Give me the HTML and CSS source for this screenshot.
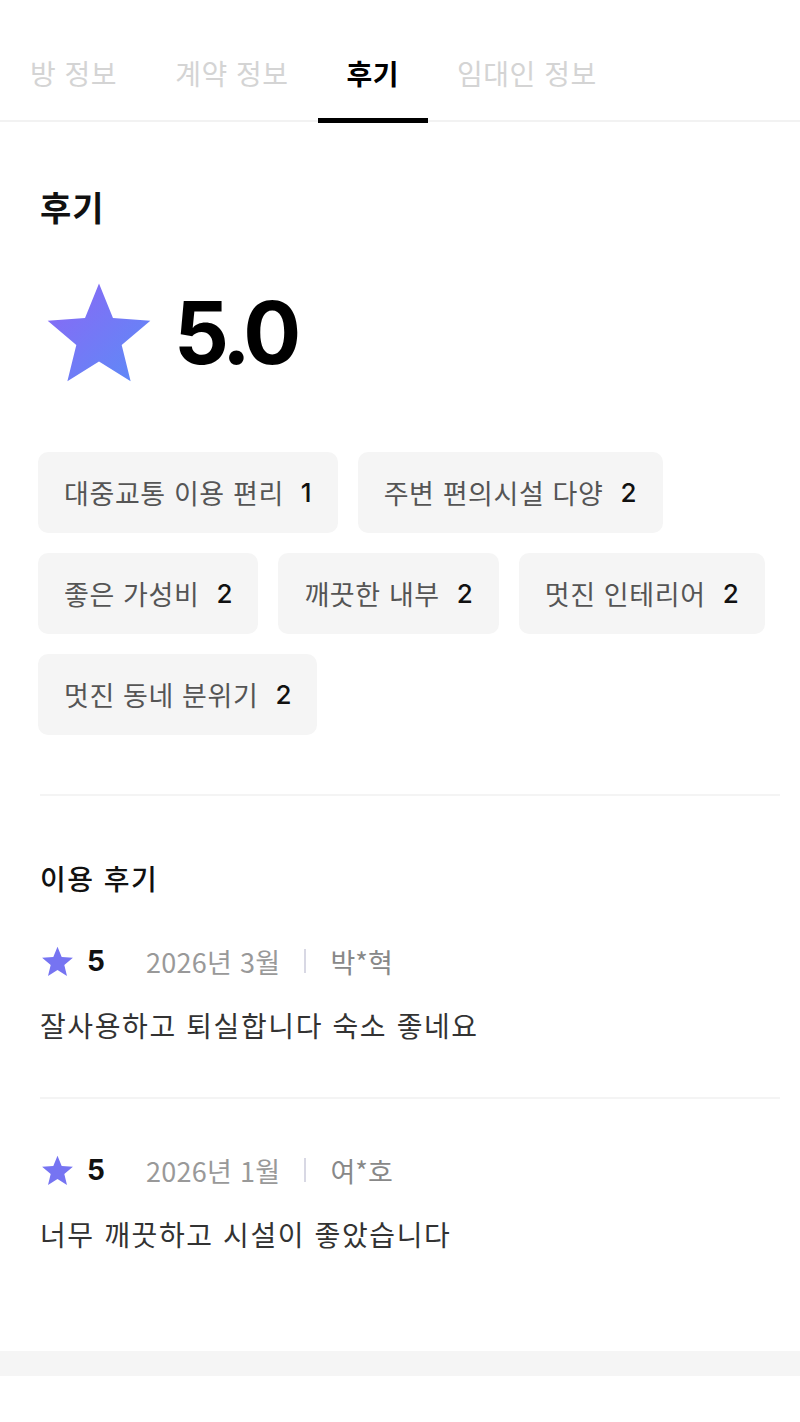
FILE: index.html
```html
<!DOCTYPE html>
<html lang="ko">
<head>
    <meta charset="UTF-8">
    <meta name="viewport" content="width=device-width, initial-scale=1.0">
    <title>후기</title>
    <link rel="stylesheet" href="styles.css">
</head>
<body>
    <nav class="tabs">
        <div class="tab">방 정보</div>
        <div class="tab">계약 정보</div>
        <div class="tab active">후기</div>
        <div class="tab">임대인 정보</div>
    </nav>

    <main class="content">
        <h2 class="section-title">후기</h2>

        <div class="rating">
            <svg class="rating-star" viewBox="0 0 24 24" width="110" height="110">
                <defs>
                    <linearGradient id="starGrad" x1="0" y1="0" x2="1" y2="1">
                        <stop offset="0" stop-color="#8c66f5"/>
                        <stop offset="1" stop-color="#5b8cf7"/>
                    </linearGradient>
                </defs>
                <path d="M12 1.2l3.05 7.55 8.15.6-6.25 5.25 1.95 7.95L12 18.2l-6.9 4.35 1.95-7.95L.8 9.35l8.15-.6z" fill="url(#starGrad)"/>
            </svg>
            <span class="rating-score">5.0</span>
        </div>

        <ul class="tags">
            <li class="tag">대중교통 이용 편리<span class="tag-count">1</span></li>
            <li class="tag">주변 편의시설 다양<span class="tag-count">2</span></li>
            <li class="tag">좋은 가성비<span class="tag-count">2</span></li>
            <li class="tag">깨끗한 내부<span class="tag-count">2</span></li>
            <li class="tag">멋진 인테리어<span class="tag-count">2</span></li>
            <li class="tag">멋진 동네 분위기<span class="tag-count">2</span></li>
        </ul>

        <hr class="divider">

        <section class="reviews">
            <h3 class="reviews-title">이용 후기</h3>
            <ul class="review-list">
                <li class="review">
                    <div class="review-meta">
                        <svg class="mini-star" viewBox="0 0 24 24" width="33" height="33">
                            <path d="M12 1.2l3.05 7.55 8.15.6-6.25 5.25 1.95 7.95L12 18.2l-6.9 4.35 1.95-7.95L.8 9.35l8.15-.6z" fill="#7674f2"/>
                        </svg>
                        <span class="review-score">5</span>
                        <span class="review-date">2026년 3월</span>
                        <span class="review-sep"></span>
                        <span class="review-name">박*혁</span>
                    </div>
                    <p class="review-text">잘사용하고 퇴실합니다 숙소 좋네요</p>
                </li>
                <li class="review">
                    <div class="review-meta">
                        <svg class="mini-star" viewBox="0 0 24 24" width="33" height="33">
                            <path d="M12 1.2l3.05 7.55 8.15.6-6.25 5.25 1.95 7.95L12 18.2l-6.9 4.35 1.95-7.95L.8 9.35l8.15-.6z" fill="#7674f2"/>
                        </svg>
                        <span class="review-score">5</span>
                        <span class="review-date">2026년 1월</span>
                        <span class="review-sep"></span>
                        <span class="review-name">여*호</span>
                    </div>
                    <p class="review-text">너무 깨끗하고 시설이 좋았습니다</p>
                </li>
            </ul>
        </section>
    </main>

    <div class="band"></div>
</body>
</html>
```

FILE: styles.css
```css
:root {
    --text-main: #111111;
    --text-sub: #555555;
    --text-muted: #999999;
    --line: #f2f2f2;
    --chip-bg: #f5f5f5;
}

* {
    box-sizing: border-box;
    margin: 0;
    padding: 0;
}

body {
    font-family: "Noto Sans CJK KR", "Noto Sans", sans-serif;
    background-color: #ffffff;
    color: var(--text-main);
}

ul {
    list-style: none;
}

.tabs {
    display: flex;
    padding-left: 1px;
    border-bottom: 2px solid var(--line);
}

.tab {
    position: relative;
    padding: 53px 29px 0;
    height: 120px;
    font-size: 28px;
    line-height: 40px;
    letter-spacing: 0.5px;
    color: #d4d4d4;
}

.tab.active {
    color: #000000;
    font-weight: 700;
}

.tab.active::after {
    content: "";
    position: absolute;
    left: 0;
    right: 0;
    bottom: -3px;
    height: 5px;
    background-color: #000000;
}

.content {
    padding: 0 20px 0 40px;
}

.section-title {
    margin-top: 62px;
    font-size: 34px;
    line-height: 46px;
    font-weight: 700;
    letter-spacing: 1px;
}

.rating {
    display: flex;
    align-items: center;
    gap: 20px;
    margin-top: 48px;
    margin-left: 4px;
}

.rating-star {
    display: block;
}

.rating-score {
    font-family: Inter, "Liberation Sans", sans-serif;
    font-size: 86px;
    line-height: 100px;
    font-weight: 700;
    letter-spacing: -5px;
    color: #000000;
}

.tags {
    display: flex;
    flex-wrap: wrap;
    gap: 20px;
    margin-top: 64px;
    margin-left: -2px;
}

.tag {
    display: flex;
    align-items: center;
    height: 81px;
    padding: 0 26px;
    border-radius: 10px;
    background-color: var(--chip-bg);
    font-size: 27px;
    letter-spacing: 0.6px;
    color: var(--text-sub);
}

.tag-count {
    margin-left: 17px;
    color: var(--text-main);
    font-family: Inter, "Liberation Sans", sans-serif;
    font-size: 26px;
    font-weight: 500;
    letter-spacing: 0;
}

.divider {
    margin-top: 59px;
    border: none;
    height: 2px;
    background-color: #f4f4f4;
}

.reviews-title {
    margin-top: 62px;
    font-size: 28px;
    line-height: 40px;
    font-weight: 500;
    letter-spacing: 1.5px;
}

.review {
    padding: 51px 0 52px;
    border-bottom: 2px solid #f4f4f4;
}

.review:first-child {
    padding-top: 43px;
}

.review:last-child {
    border-bottom: none;
    padding-bottom: 97px;
}

.review-meta {
    display: flex;
    align-items: center;
    height: 40px;
}

.mini-star {
    display: block;
    margin-left: 1px;
}

.review-score {
    margin-left: 13px;
    font-family: Inter, "Liberation Sans", sans-serif;
    font-size: 28px;
    font-weight: 700;
}

.review-date {
    margin-left: 41px;
    font-size: 27px;
    letter-spacing: 0.3px;
    color: var(--text-muted);
}

.review-sep {
    width: 2px;
    height: 24px;
    margin: 0 24px;
    background-color: #d8d8e4;
}

.review-name {
    font-size: 27px;
    color: #888888;
}

.review-text {
    margin-top: 24px;
    font-size: 28px;
    line-height: 40px;
    letter-spacing: 1.6px;
    color: #333333;
}

.band {
    height: 25px;
    background-color: #f5f5f5;
}
```
